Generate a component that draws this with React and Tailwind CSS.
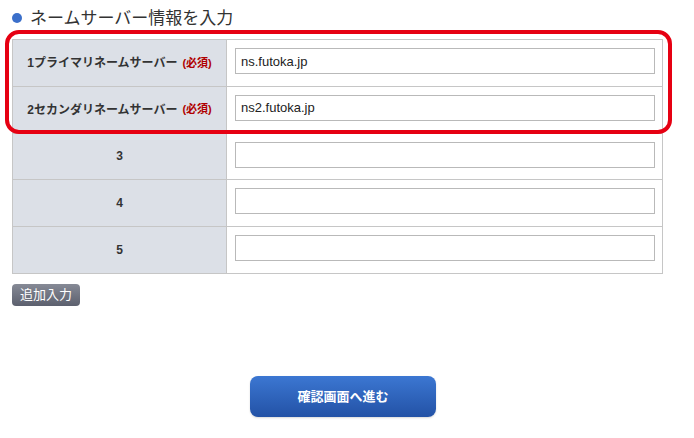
const rows = [
  { label: "1プライマリネームサーバー", required: true, value: "ns.futoka.jp" },
  { label: "2セカンダリネームサーバー", required: true, value: "ns2.futoka.jp" },
  { label: "3", value: "" },
  { label: "4", value: "" },
  { label: "5", value: "" },
];

export default function App() {
  return (
    <div className="relative h-[438px] w-[694px] overflow-hidden bg-white font-['Liberation_Sans','Noto_Sans_CJK_JP',sans-serif] text-[#333]">
      <div className="px-3 pt-[6px]">
        <h2 className="flex h-[24px] items-center gap-[8px] text-[17px] leading-none">
          <span className="size-[10px] rounded-full bg-[#3b6fca]" />
          ネームサーバー情報を入力
        </h2>

        <div className="mt-[9px] w-[651px] border border-b-0 border-[#c6c6c6]">
          {rows.map((row) => (
            <div key={row.label} className="grid grid-cols-[214px_1fr] border-b border-[#c6c6c6]">
              <div className="flex h-[45.8px] items-center justify-center border-r border-[#c6c6c6] bg-[#dce0e7] text-[12px] font-bold">
                {row.label}
                {row.required && <span className="ml-[5px] text-[11px] text-[#b00000]">(必須)</span>}
              </div>
              <div className="pl-[8px] pr-[7px] pt-[8px]">
                <input
                  defaultValue={row.value}
                  className="block h-[26px] w-full border border-[#b9b9b9] px-[5px] text-[13px] text-[#222] outline-none"
                />
              </div>
            </div>
          ))}
        </div>

        <button className="mt-[10px] block h-[22px] w-[68px] rounded-[4px] bg-gradient-to-b from-[#868a96] to-[#5c606e] text-[13px] text-white">
          追加入力
        </button>

        <div className="mt-[70px] flex justify-center pr-[8px]">
          <button className="block h-[41px] w-[186px] rounded-[8px] bg-gradient-to-b from-[#3c77d2] to-[#2352a6] text-[13px] font-bold text-white shadow-[0_1px_2px_rgba(0,0,0,0.15)]">
            確認画面へ進む
          </button>
        </div>
      </div>

      <div className="pointer-events-none absolute left-[5px] top-[30px] h-[104px] w-[667px] rounded-[14px] border-[4px] border-[#e60012]" />
    </div>
  );
}
